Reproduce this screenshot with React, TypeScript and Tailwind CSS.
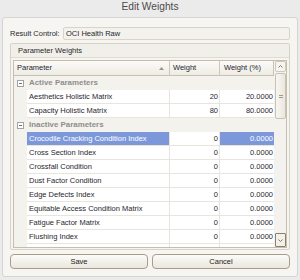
import React from "react";

type Row =
  | { kind: "group"; label: string }
  | { kind: "data"; label: string; w: string; p: string; sel?: boolean };

const rows: Row[] = [
  { kind: "group", label: "Active Parameters" },
  { kind: "data", label: "Aesthetics Holistic Matrix", w: "20", p: "20.0000" },
  { kind: "data", label: "Capacity Holistic Matrix", w: "80", p: "80.0000" },
  { kind: "group", label: "Inactive Parameters" },
  { kind: "data", label: "Crocodile Cracking Condition Index", w: "0", p: "0.0000", sel: true },
  { kind: "data", label: "Cross Section Index", w: "0", p: "0.0000" },
  { kind: "data", label: "Crossfall Condition", w: "0", p: "0.0000" },
  { kind: "data", label: "Dust Factor Condition", w: "0", p: "0.0000" },
  { kind: "data", label: "Edge Defects Index", w: "0", p: "0.0000" },
  { kind: "data", label: "Equitable Access Condition Matrix", w: "0", p: "0.0000" },
  { kind: "data", label: "Fatigue Factor Matrix", w: "0", p: "0.0000" },
  { kind: "data", label: "Flushing Index", w: "0", p: "0.0000" },
  { kind: "data", label: "Formation Condition Index", w: "0", p: "0.0000" },
];

function Minus() {
  return (
    <div className="w-[7px] h-[7px] border border-[#a3a3a3] bg-white flex items-center justify-center">
      <div className="w-[3px] h-px bg-[#6e6e6e]" />
    </div>
  );
}

export default function App() {
  return (
    <div className="w-[300px] h-[280px] bg-[#ebebeb] overflow-hidden flex flex-col font-['Liberation_Sans',Arial,sans-serif] text-[7.5px] leading-none text-[#1f1f2e]">
      <div className="h-[17px] shrink-0 flex items-center justify-center pb-[2px] text-[10.2px] text-[#4b4b4b]">
        Edit Weights
      </div>
      <div className="mx-[2px] h-[260px] shrink-0 border border-[#d4d4d4] rounded-[3px] bg-[#f6f5f2] px-[7px] pt-[9px] flex flex-col">
        <div className="flex items-center h-[13px] shrink-0">
          <span className="w-[53px] text-[#2a2a2a]">Result Control:</span>
          <div className="flex-1 h-[13px] border border-[#d9d4ca] bg-[#f4f2ed] rounded-[2px] flex items-center pl-[2px]">
            OCI Health Raw
          </div>
        </div>

        <div className="mt-[3px] h-[207px] shrink-0 border border-[#d8d2c6] rounded-[2px] flex flex-col overflow-hidden">
          <div className="h-[14px] shrink-0 bg-[#f1efe9] border-b border-[#e0dbd1] flex items-center pl-[7px] text-[#2a2a2a]">
            Parameter Weights
          </div>
          <div className="flex-1 min-h-0 px-[2px] pt-[2px] pb-[1px] flex">
            <div className="flex-1 min-h-0 border border-[#c6bead] bg-white flex overflow-hidden">
              <div className="w-[260px] shrink-0 flex flex-col overflow-hidden">
                <div className="h-[15px] shrink-0 flex bg-gradient-to-b from-[#fbfaf7] to-[#efece5] border-b border-r border-[#c9c2b2]">
                  <div className="w-[155px] flex items-center pl-[3px] pr-[5px] justify-between">
                    <span>Parameter</span>
                    <svg width="5" height="3" viewBox="0 0 5 3">
                      <path d="M0 3 L2.5 0 L5 3 Z" fill="#9a9488" />
                    </svg>
                  </div>
                  <div className="w-[50px] border-l border-[#cfc8b9] flex items-center pl-[3px]">Weight</div>
                  <div className="flex-1 border-l border-[#cfc8b9] flex items-center pl-[4px]">Weight (%)</div>
                </div>
                {rows.map((r, i) =>
                  r.kind === "group" ? (
                    <div key={i} className="h-[14px] shrink-0 flex items-center bg-[#f4f2ec]">
                      <div className="w-[15px] pl-[3px] flex items-center">
                        <Minus />
                      </div>
                      <span className="font-bold text-[7.9px] text-[#8e8e8e]">{r.label}</span>
                    </div>
                  ) : (
                    <div key={i} className="h-[14px] shrink-0 flex">
                      <div className="w-[13px] bg-[#f4f2ec]" />
                      <div
                        className={`w-[142px] flex items-center pl-[2px] border-b border-[#e8e5de] whitespace-nowrap ${
                          r.sel ? "bg-[#7d98da] text-white" : ""
                        }`}
                      >
                        {r.label}
                      </div>
                      <div className="w-[50px] flex items-center justify-end pr-[1px] border-l border-b border-[#e8e5de]">
                        {r.w}
                      </div>
                      <div
                        className={`flex-1 flex items-center justify-end pr-[1px] border-l border-b border-[#e8e5de] ${
                          r.sel ? "bg-[#7d98da] text-white" : ""
                        }`}
                      >
                        {r.p}
                      </div>
                    </div>
                  )
                )}
              </div>
              <div className="flex-1 bg-[#f4f2ee] pl-[1px] flex flex-col">
                <div className="h-[11px] shrink-0 border border-[#cfc8b9] rounded-[2px] bg-[#f7f5f1] flex items-center justify-center">
                  <svg width="5" height="3" viewBox="0 0 5 3">
                    <path d="M0.5 2.5 L2.5 0.5 L4.5 2.5" fill="none" stroke="#6d6a66" strokeWidth="0.9" />
                  </svg>
                </div>
                <div className="mt-[1px] h-[46px] shrink-0 border border-[#c9c1b1] rounded-[2px] bg-gradient-to-r from-[#f8f6f2] to-[#ebe7df] flex flex-col items-center justify-center gap-[1px]">
                  <div className="w-[4px] h-px bg-[#9d978c]" />
                  <div className="w-[4px] h-px bg-[#9d978c]" />
                </div>
                <div className="flex-1" />
                <div className="h-[14px] shrink-0 border border-[#8e7f6d] rounded-[1px] bg-[#f3f0ea] flex items-center justify-center">
                  <svg width="5" height="3" viewBox="0 0 5 3">
                    <path d="M0.5 0.5 L2.5 2.5 L4.5 0.5" fill="none" stroke="#6d6a66" strokeWidth="0.9" />
                  </svg>
                </div>
              </div>
            </div>
          </div>
        </div>

        <div className="mt-[4px] flex gap-[4px] shrink-0">
          <button className="w-[138px] h-[15px] rounded-[4px] border border-[#a89c8c] bg-gradient-to-b from-[#fcfbf8] to-[#ebe7df] flex items-center justify-center text-[#222]">
            Save
          </button>
          <button className="w-[138px] h-[15px] rounded-[4px] border border-[#a89c8c] bg-gradient-to-b from-[#fcfbf8] to-[#ebe7df] flex items-center justify-center text-[#222]">
            Cancel
          </button>
        </div>
      </div>
    </div>
  );
}
